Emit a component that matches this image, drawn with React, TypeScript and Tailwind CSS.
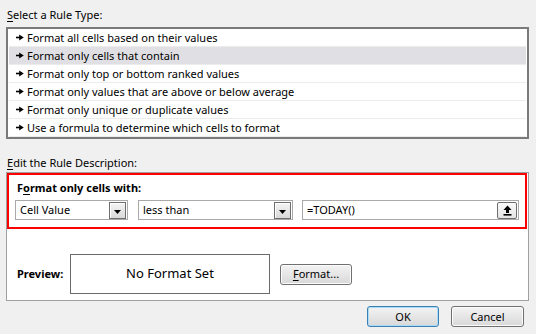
import React from "react";

const rules = [
  "Format all cells based on their values",
  "Format only cells that contain",
  "Format only top or bottom ranked values",
  "Format only values that are above or below average",
  "Format only unique or duplicate values",
  "Use a formula to determine which cells to format",
];

function Bullet() {
  return (
    <svg width="8" height="7" viewBox="0 0 8 7" className="shrink-0">
      <rect x="0" y="2.7" width="4" height="1.6" fill="#000" />
      <path d="M3.2 0.6 L7.8 3.5 L3.2 6.4 Z" fill="#000" />
    </svg>
  );
}

function DropBtn() {
  return (
    <div className="w-[17px] h-[17px] border border-[#6e6e6e] bg-gradient-to-b from-[#f4f4f4] to-[#d9d9d9] shadow-[inset_1px_1px_0_#ffffff] flex items-center justify-center">
      <svg width="7" height="4" viewBox="0 0 7 4" className="mt-[3px]">
        <path d="M0 0 H7 L3.5 4 Z" fill="#000" />
      </svg>
    </div>
  );
}

function Combo({ w, text }: { w: string; text: string }) {
  return (
    <div className={`${w} h-[20px] border border-[#a9a9a9] bg-white flex items-center justify-between pl-[4px] pr-[1px]`}>
      <span className="leading-[16px]">{text}</span>
      <DropBtn />
    </div>
  );
}

function WinBtn({ children, w, def }: { children: React.ReactNode; w: string; def?: boolean }) {
  return (
    <div
      className={`${w} h-[21px] rounded-[3px] border flex items-center justify-center leading-[16px] bg-gradient-to-b from-[#f3f3f3] via-[#e6e6e6] to-[#d8d8d8] ${
        def
          ? "border-[#3c7fb1] shadow-[inset_0_0_0_1px_#a8dcf7]"
          : "border-[#707070] shadow-[inset_0_0_0_1px_#fcfcfc]"
      }`}
    >
      {children}
    </div>
  );
}

export default function App() {
  return (
    <div className="w-[536px] h-[334px] bg-[#f0f0f0] text-black text-[11px] font-['Noto_Sans',sans-serif] pl-[6px] pt-[7px] flex flex-col">
      <div className="h-[16px] leading-[16px] pl-[1px]">
        <span className="underline underline-offset-2">S</span>elect a Rule Type:
      </div>
      <div className="mt-[4px] w-[523px] h-[112px] border-2 border-[#7a7a7a] bg-white px-[1px] flex flex-col">
        {rules.map((r, i) => (
          <div
            key={r}
            className={`h-[18px] border-b border-[#ececec] flex items-center gap-[3px] pl-[7px] leading-[16px] ${
              i === 1 ? "bg-[#e0e0e4]" : ""
            }`}
          >
            <Bullet />
            <span>{r}</span>
          </div>
        ))}
      </div>

      <div className="mt-[16px] h-[16px] leading-[16px] pl-[1px]">
        <span className="underline underline-offset-2">E</span>dit the Rule Description:
      </div>
      <div className="mt-[1px] w-[523px] h-[129px] border border-[#a0a0a0] bg-white flex flex-col">
        <div className="w-[520px] h-[56px] border-2 border-[#ff0000] flex flex-col pt-[5px]">
          <div className="h-[16px] leading-[16px] pl-[8px] font-bold">
            F<span className="underline underline-offset-2">o</span>rmat only cells with:
          </div>
          <div className="mt-[4px] ml-[6px] flex items-center">
            <Combo w="w-[113px]" text="Cell Value" />
            <div className="w-[10px]" />
            <Combo w="w-[155px]" text="less than" />
            <div className="w-[9px]" />
            <div className="w-[217px] h-[20px] border border-[#a9a9a9] bg-white flex items-center justify-between pl-[4px] pr-[1px]">
              <span className="leading-[16px]">=TODAY()</span>
              <div className="w-[20px] h-[17px] border border-[#6e6e6e] rounded-[2px] bg-gradient-to-b from-[#fafafa] to-[#e4e4e4] flex items-center justify-center">
                <svg width="9" height="11" viewBox="0 0 9 11">
                  <path d="M4.5 0.5 L8.5 5 H6 V8 H3 V5 H0.5 Z" fill="#000" />
                  <rect x="0.5" y="9" width="8" height="1.6" fill="#000" />
                </svg>
              </div>
            </div>
          </div>
        </div>
        <div className="mt-[25px] flex items-center pl-[10px]">
          <div className="w-[53px] font-bold leading-[16px]">Preview:</div>
          <div className="w-[200px] h-[40px] border border-[#6a6a6a] flex items-center justify-center text-[13px]">
            No Format Set
          </div>
          <div className="ml-[10px]">
            <WinBtn w="w-[72px]">
              <span>
                <span className="underline underline-offset-2">F</span>ormat...
              </span>
            </WinBtn>
          </div>
        </div>
      </div>

      <div className="mt-[5px] flex justify-end pr-[12px] gap-[12px]">
        <WinBtn w="w-[72px]" def>
          OK
        </WinBtn>
        <WinBtn w="w-[73px]">Cancel</WinBtn>
      </div>
    </div>
  );
}
